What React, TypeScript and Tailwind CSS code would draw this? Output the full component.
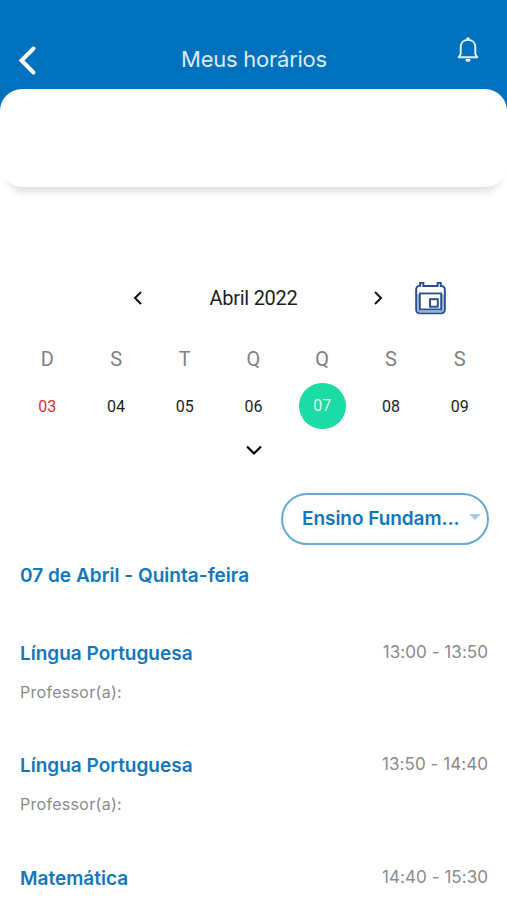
import React from 'react';
import { clsx } from 'clsx';

const WEEK = [
  { label: 'D', day: '03', holiday: true },
  { label: 'S', day: '04' },
  { label: 'T', day: '05' },
  { label: 'Q', day: '06' },
  { label: 'Q', day: '07', selected: true },
  { label: 'S', day: '08' },
  { label: 'S', day: '09' },
];

const LESSONS = [
  { subject: 'Língua Portuguesa', time: '13:00 - 13:50', teacher: 'Professor(a):' },
  { subject: 'Língua Portuguesa', time: '13:50 - 14:40', teacher: 'Professor(a):' },
  { subject: 'Matemática', time: '14:40 - 15:30' },
];

export default function App() {
  return (
    <div className="h-[900px] w-full overflow-hidden bg-white font-['Inter',sans-serif]">
      <Header />
      <div className="-mt-[21px] h-[98px] rounded-[22px] bg-white shadow-[0_12px_8px_-8px_rgba(0,0,0,0.15)]" />
      <Calendar />
      <div className="flex justify-end pr-[18px]">
        <button className="flex h-[52px] w-[208px] items-center justify-between rounded-full border-2 border-[#66a9d7] pl-[19px] pr-1.5 text-[#0e77bd]">
          <span className="pt-px text-[19px] font-semibold tracking-[-0.05px]">Ensino Fundam...</span>
          <svg className="mb-1 h-1.5 w-3" viewBox="0 0 12 6" fill="#a9cce6">
            <path d="M0 0h12L6 6z" />
          </svg>
        </button>
      </div>
      <main className="px-5 pt-[17px]">
        <h2 className="text-[19px] font-semibold leading-7 tracking-[0.03px] text-[#0e77bd]">07 de Abril - Quinta-feira</h2>
        <div className="pt-[50px]">
          {LESSONS.map((lesson, idx) => (
            <Lesson key={idx} {...lesson} />
          ))}
        </div>
      </main>
    </div>
  );
}

function Header() {
  return (
    <header className="flex h-[110px] items-start justify-between bg-[#0071bc] pl-[18px] pr-7 text-white">
      <button className="mt-[45px]" aria-label="Voltar">
        <svg width="20" height="31" viewBox="0 0 20 31" fill="none" stroke="currentColor" strokeWidth="4" strokeLinecap="round">
          <path d="M15.5 3.5L3.5 15.5l12 12" />
        </svg>
      </button>
      <h1 className="mt-[45px] pl-[13px] text-[22px] font-normal leading-7 tracking-[-0.25px] text-[#d9ecf9]">Meus horários</h1>
      <button className="mt-[36px]" aria-label="Notificações">
        <svg width="22" height="28" viewBox="0 0 22 28" fill="none" stroke="#e4f2fb" strokeWidth="1.9" strokeLinejoin="round">
          <path d="M3.7 18V11C3.7 6.8 6.7 3.9 11 3.9s7.3 2.9 7.3 7.1v7l2 3.3H1.7z" />
          <path d="M10.2 3.3v-.9h1.6v.9" />
          <path d="M9.4 24h3.2c-.2 1.1-3 1.1-3.2 0z" />
        </svg>
      </button>
    </header>
  );
}

function Calendar() {
  return (
    <section className="h-[306px] pt-[91px] font-['Roboto',sans-serif]">
      <div className="flex h-10 items-center pl-[132px]">
        <svg width="11" height="14" viewBox="0 0 11 14" fill="none" stroke="#111" strokeWidth="2">
          <path d="M9 1L3 7l6 6" />
        </svg>
        <span className="w-[221px] text-center text-[20px] tracking-[-0.25px] text-[#1c1c1c]">Abril 2022</span>
        <svg className="ml-[9px]" width="11" height="14" viewBox="0 0 11 14" fill="none" stroke="#111" strokeWidth="2">
          <path d="M2 1l6 6-6 6" />
        </svg>
        <CalendarIcon />
      </div>
      <div className="grid grid-cols-7 px-[13px] pt-[27px]">
        {WEEK.map((item, idx) => (
          <div key={idx} className="flex flex-col items-center">
            <span className="text-[20px] leading-7 text-[#808080]">{item.label}</span>
            <span
              className={clsx(
                'mt-[10px] flex h-[46px] w-[47px] items-center justify-center rounded-full text-[16px]',
                item.selected ? 'bg-[#1bdca4] pb-px text-[#d8fff3]' : 'pt-px',
                item.holiday && 'text-[#d3302f]',
                !item.selected && !item.holiday && 'text-[#1c1c1c]'
              )}
            >
              {item.day}
            </span>
          </div>
        ))}
      </div>
      <div className="flex justify-center pl-px pt-4">
        <svg width="18" height="11" viewBox="0 0 18 11" fill="none" stroke="#000" strokeWidth="2.2">
          <path d="M2 1.5l7 7 7-7" />
        </svg>
      </div>
    </section>
  );
}

function CalendarIcon() {
  return (
    <svg className="ml-[31px]" width="31" height="34" viewBox="0 0 32 34" fill="none">
      <path d="M5.4 4.4V1.4h3.2v3.2h14.8V1.4h3.2v3.2h.6a3.6 3.6 0 0 1 3.6 3.6v21a3.6 3.6 0 0 1-3.6 3.6H4.8A3.6 3.6 0 0 1 1.2 29V8a3.6 3.6 0 0 1 3.6-3.6z" fill="white" stroke="#2a4f8f" strokeWidth="2" />
      <path d="M3.1 13v15.7a2.2 2.2 0 0 0 2.2 2.2h21.4a2.2 2.2 0 0 0 2.2-2.2V13" stroke="#9ab3d6" strokeWidth="2" />
      <rect x="5" y="12.3" width="22" height="16.5" stroke="#2a4f8f" strokeWidth="1.9" />
      <rect x="15.5" y="18.2" width="8" height="7.8" stroke="#2a4f8f" strokeWidth="2" />
    </svg>
  );
}

function Lesson({ subject, time, teacher }: { subject: string; time: string; teacher?: string }) {
  return (
    <div className="h-[112.4px]">
      <div className="flex items-start justify-between">
        <h3 className="text-[19px] font-semibold leading-7 text-[#0e77bd]">{subject}</h3>
        <span className="-mr-px text-[17px] leading-[25px] tracking-[0.05px] text-[#8a8a8a]">{time}</span>
      </div>
      {teacher && <p className="mt-3 text-[16px] leading-6 tracking-[0.3px] text-[#8a8a8a]">{teacher}</p>}
    </div>
  );
}
